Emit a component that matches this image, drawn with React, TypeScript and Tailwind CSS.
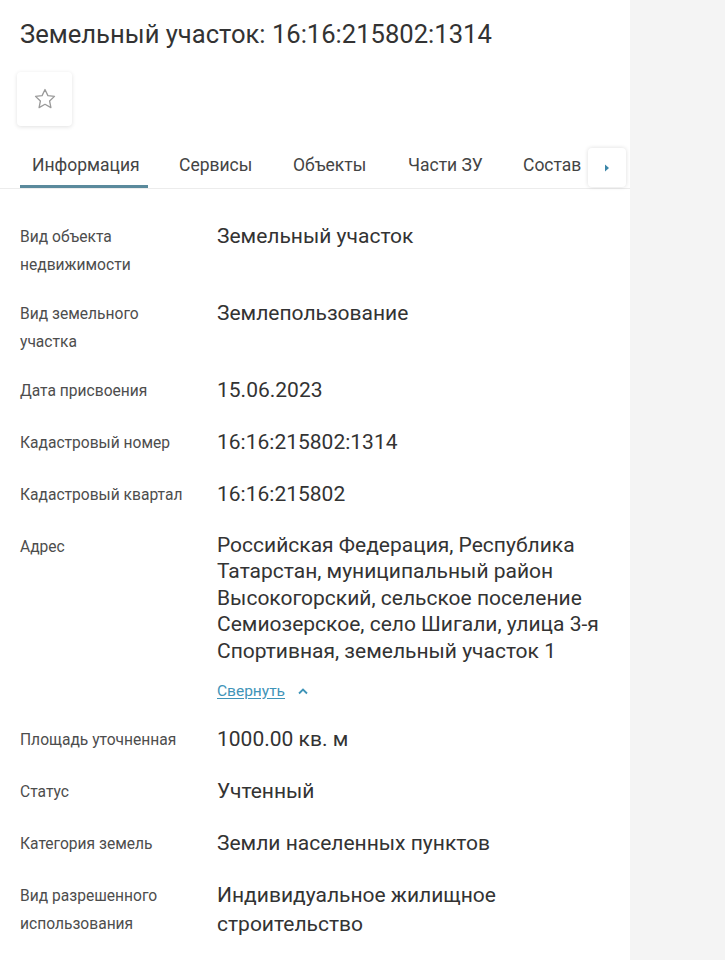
import React from 'react';

const rows: { label: string[]; value: string[]; collapse?: boolean }[] = [
  { label: ['Вид объекта', 'недвижимости'], value: ['Земельный участок'] },
  { label: ['Вид земельного', 'участка'], value: ['Землепользование'] },
  { label: ['Дата присвоения'], value: ['15.06.2023'] },
  { label: ['Кадастровый номер'], value: ['16:16:215802:1314'] },
  { label: ['Кадастровый квартал'], value: ['16:16:215802'] },
  {
    label: ['Адрес'],
    value: [
      'Российская Федерация, Республика',
      'Татарстан, муниципальный район',
      'Высокогорский, сельское поселение',
      'Семиозерское, село Шигали, улица 3-я',
      'Спортивная, земельный участок 1',
    ],
    collapse: true,
  },
  { label: ['Площадь уточненная'], value: ['1000.00 кв. м'] },
  { label: ['Статус'], value: ['Учтенный'] },
  { label: ['Категория земель'], value: ['Земли населенных пунктов'] },
  { label: ['Вид разрешенного', 'использования'], value: ['Индивидуальное жилищное', 'строительство'] },
];

const tabs = [
  { name: 'Сервисы', w: 'w-[114px]' },
  { name: 'Объекты', w: 'w-[115px]' },
  { name: 'Части ЗУ', w: 'w-[115px]' },
  { name: 'Состав', w: 'w-[65px]' },
];

export default function App() {
  return (
    <div className="flex w-[725px] h-[960px] overflow-hidden bg-[#f4f4f4] font-['Roboto',sans-serif]">
      <div className="w-[630px] shrink-0 bg-white">
        <h1 className="px-5 pt-[19px] text-[25.6px] leading-[30px] text-[#333]">Земельный участок: 16:16:215802:1314</h1>

        <div className="ml-[17px] mt-[23px] flex h-[54px] w-[55px] items-center justify-center rounded bg-white shadow-[0_1px_4px_rgba(0,0,0,0.12)]">
          <svg width="24" height="24" viewBox="0 0 24 24" fill="none" stroke="#9a9a9a" strokeWidth="1.3" strokeLinejoin="round">
            <path d="M12 2.5l2.9 6.1 6.6.8-4.9 4.6 1.3 6.6L12 17.3l-5.9 3.3 1.3-6.6-4.9-4.6 6.6-.8z" />
          </svg>
        </div>

        <div className="mt-[22px] flex h-[41px] items-end border-b border-[#ececec] pl-5">
          <div className="w-[128px] border-b-[3px] border-[#5a8a9c] pb-[8px] pl-[12px] text-[17.5px] leading-[24px] text-[#444]">
            Информация
          </div>
          <div className="ml-[31px] flex items-end">
            {tabs.map((t) => (
              <div key={t.name} className={`${t.w} pb-[11px] text-[17.5px] leading-[24px] text-[#444]`}>
                {t.name}
              </div>
            ))}
          </div>
          <div className="mb-[1px] flex h-[39px] w-[38px] items-center justify-center rounded bg-white shadow-[0_0_4px_rgba(0,0,0,0.14)]">
            <svg width="6" height="8" viewBox="0 0 6 8">
              <path d="M1 0.5L5 4L1 7.5z" fill="#3b86a8" />
            </svg>
          </div>
        </div>

        <div className="mt-[33px] flex flex-col gap-[20px] pl-5">
          {rows.map((r) => (
            <div key={r.label[0]} className="flex min-h-[32px]">
              <div className="w-[197px] shrink-0 pt-[1px] text-[15.6px] leading-[28px] text-[#4d4d4d]">
                {r.label.map((l) => (
                  <div key={l}>{l}</div>
                ))}
              </div>
              <div className={`text-[21px] text-[#333] ${r.collapse ? 'leading-[26.4px]' : 'leading-[28.5px]'}`}>
                {r.value.map((v) => (
                  <div key={v}>{v}</div>
                ))}
                {r.collapse && (
                  <div className="mb-[4px] mt-[17px] flex items-center gap-[12px] text-[15.5px] leading-[20px] text-[#3f94b8]">
                    <span className="underline underline-offset-2">Свернуть</span>
                    <svg width="12" height="8" viewBox="0 0 12 8" fill="none" stroke="#3f94b8" strokeWidth="1.8">
                      <path d="M2 6.5L6 2.5l4 4" />
                    </svg>
                  </div>
                )}
              </div>
            </div>
          ))}
        </div>
      </div>
      <div className="flex-1" />
    </div>
  );
}
